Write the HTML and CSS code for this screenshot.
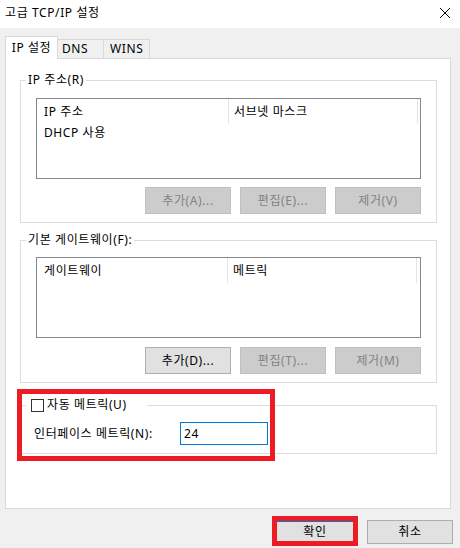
FILE: index.html
```html
<!DOCTYPE html>
<html lang="ko">
<head>
<meta charset="utf-8">
<title>고급 TCP/IP 설정</title>
<link rel="stylesheet" href="styles.css">
</head>
<body>
<div class="window">
  <div class="titlebar">
    <span class="title">고급 TCP/IP 설정</span>
    <svg class="close" viewBox="0 0 10 10" width="10" height="10"><path d="M0 0L10 10M10 0L0 10" stroke="#000" stroke-width="1" fill="none"/></svg>
  </div>
  <div class="main">
    <div class="tabs">
      <div class="tab active">IP 설정</div>
      <div class="tab">DNS</div>
      <div class="tab tab-wins">WINS</div>
    </div>
    <div class="panel">
      <fieldset class="group">
        <legend class="legend">IP 주소(R)</legend>
        <div class="inner">
          <div class="list">
            <div class="list-head">
              <div class="col c1">IP 주소</div>
              <div class="col c2">서브넷 마스크</div>
            </div>
            <div class="list-row">DHCP 사용</div>
          </div>
          <div class="btnrow">
            <button class="btn" disabled>추가(A)...</button>
            <button class="btn" disabled>편집(E)...</button>
            <button class="btn" disabled>제거(V)</button>
          </div>
        </div>
      </fieldset>

      <fieldset class="group group-gw">
        <legend class="legend">기본 게이트웨이(F):</legend>
        <div class="inner">
          <div class="list">
            <div class="list-head">
              <div class="col c1 c1-gw">게이트웨이</div>
              <div class="col c2">메트릭</div>
            </div>
          </div>
          <div class="btnrow">
            <button class="btn">추가(D)...</button>
            <button class="btn" disabled>편집(T)...</button>
            <button class="btn" disabled>제거(M)</button>
          </div>
        </div>
      </fieldset>

      <div class="metric-wrap">
        <fieldset class="group group-metric">
          <legend class="legend legend-check"><span class="checkbox"></span><span>자동 메트릭(U)</span></legend>
          <div class="metric-row">
            <span class="metric-label">인터페이스 메트릭(N):</span>
            <div class="input">24</div>
          </div>
        </fieldset>
        <div class="annot annot-group"></div>
      </div>
    </div>
    <div class="footer">
      <div class="ok-wrap">
        <button class="btn btn-default">확인</button>
        <div class="annot annot-ok"></div>
      </div>
      <button class="btn">취소</button>
    </div>
  </div>
</div>
</body>
</html>
```
FILE: styles.css
```css
* { box-sizing: border-box; }
html, body { margin: 0; padding: 0; }
body {
  width: 460px;
  height: 548px;
  overflow: hidden;
  background: #f0f0f0;
  color: #000;
  font-family: "Noto Sans", "Noto Sans CJK KR", sans-serif;
  font-size: 12px;
  line-height: 16px;
  letter-spacing: 0.6px;
}
.window {
  width: 460px;
  height: 548px;
  display: flex;
  flex-direction: column;
  background: #f0f0f0;
}
.titlebar {
  height: 28px;
  flex: none;
  background: #fff;
  display: flex;
  align-items: center;
  justify-content: space-between;
  padding: 0 10px 2px 5px;
}
.close { display: block; }
.main {
  padding: 8px 0 0 5px;
}
.tabs {
  display: flex;
  align-items: flex-end;
  height: 22px;
}
.tab {
  width: 46px;
  height: 19px;
  border: 1px solid #d9d9d9;
  border-left: none;
  border-bottom: none;
  background: #f0f0f0;
  padding-left: 4px;
  line-height: 18px;
  white-space: nowrap;
}
.tab-wins { padding-left: 6px; }
.tab.active {
  width: 53px;
  height: 23px;
  margin-bottom: -1px;
  border-left: 1px solid #d9d9d9;
  background: #fff;
  text-align: center;
  padding-left: 0;
  line-height: 22px;
  position: relative;
  z-index: 1;
}
.panel {
  width: 446px;
  height: 451px;
  background: #fff;
  border: 1px solid #d9d9d9;
  padding: 13px 13px 0 14px;
}
.group {
  margin: 0;
  width: 417px;
  border: 1px solid #dcdcdc;
  padding: 0 0 8px 5px;
  min-width: 0;
}
.legend {
  padding: 0 2px;
  line-height: 16px;
  white-space: nowrap;
}
.inner {
  padding: 10px 0 0 10px;
  display: flex;
  flex-direction: column;
  align-items: flex-start;
}
.list {
  width: 385px;
  height: 81px;
  border: 1px solid #828790;
  background: #fff;
}
.list-head {
  display: flex;
  height: 25px;
}
.col {
  height: 25px;
  line-height: 25px;
  border-right: 1px solid #e5e5e5;
  white-space: nowrap;
}
.c1 { width: 192px; padding-left: 7px; }
.c1-gw { width: 191px; }
.c2 { width: 189px; padding-left: 5px; }
.list-row {
  height: 18px;
  line-height: 18px;
  padding-left: 7px;
}
.btnrow {
  margin-top: 8px;
  width: 385px;
  display: flex;
  justify-content: flex-end;
  gap: 9px;
}
.btn {
  width: 86px;
  height: 27px;
  margin: 0;
  padding: 0;
  font-family: inherit;
  font-size: 12px;
  line-height: 16px;
  letter-spacing: 0.6px;
  color: #000;
  background: #e1e1e1;
  border: 1px solid #adadad;
  border-radius: 0;
  text-align: center;
}
.btn:disabled {
  background: #cccccc;
  border-color: #bfbfbf;
  color: #838383;
}
.group-gw { margin-top: 9px; }
.group-gw .inner { padding-top: 9px; }
.group-gw .btnrow { margin-top: 9px; }

.metric-wrap {
  position: relative;
  margin-top: 14px;
}
.group-metric { padding-bottom: 8px; }
.legend-check {
  display: flex;
  align-items: center;
  padding: 0 20px 0 5px;
}
.checkbox {
  width: 13px;
  height: 13px;
  border: 1px solid #333;
  background: #fff;
  margin-right: 3px;
  flex: none;
}
.metric-row {
  display: flex;
  align-items: center;
  padding: 9px 0 0 8px;
}
.metric-label {
  width: 146px;
  white-space: nowrap;
}
.input {
  width: 88px;
  height: 23px;
  border: 1px solid #0078d7;
  background: #fff;
  padding-left: 3px;
  line-height: 21px;
}
.footer {
  display: flex;
  justify-content: flex-end;
  gap: 9px;
  padding: 11px 7px 0 0;
}
.footer .btn { height: 24px; }
.ok-wrap { position: relative; }
.btn-default {
  border-color: #0078d7;
  box-shadow: inset 0 0 0 1px #0078d7;
}
.annot {
  position: absolute;
  border: 5px solid #ed1c24;
  pointer-events: none;
}
.annot-group {
  left: -3px;
  top: -8px;
  width: 258px;
  height: 72px;
}
.annot-ok {
  left: 0;
  top: -4px;
  width: 86px;
  height: 30px;
}
```
